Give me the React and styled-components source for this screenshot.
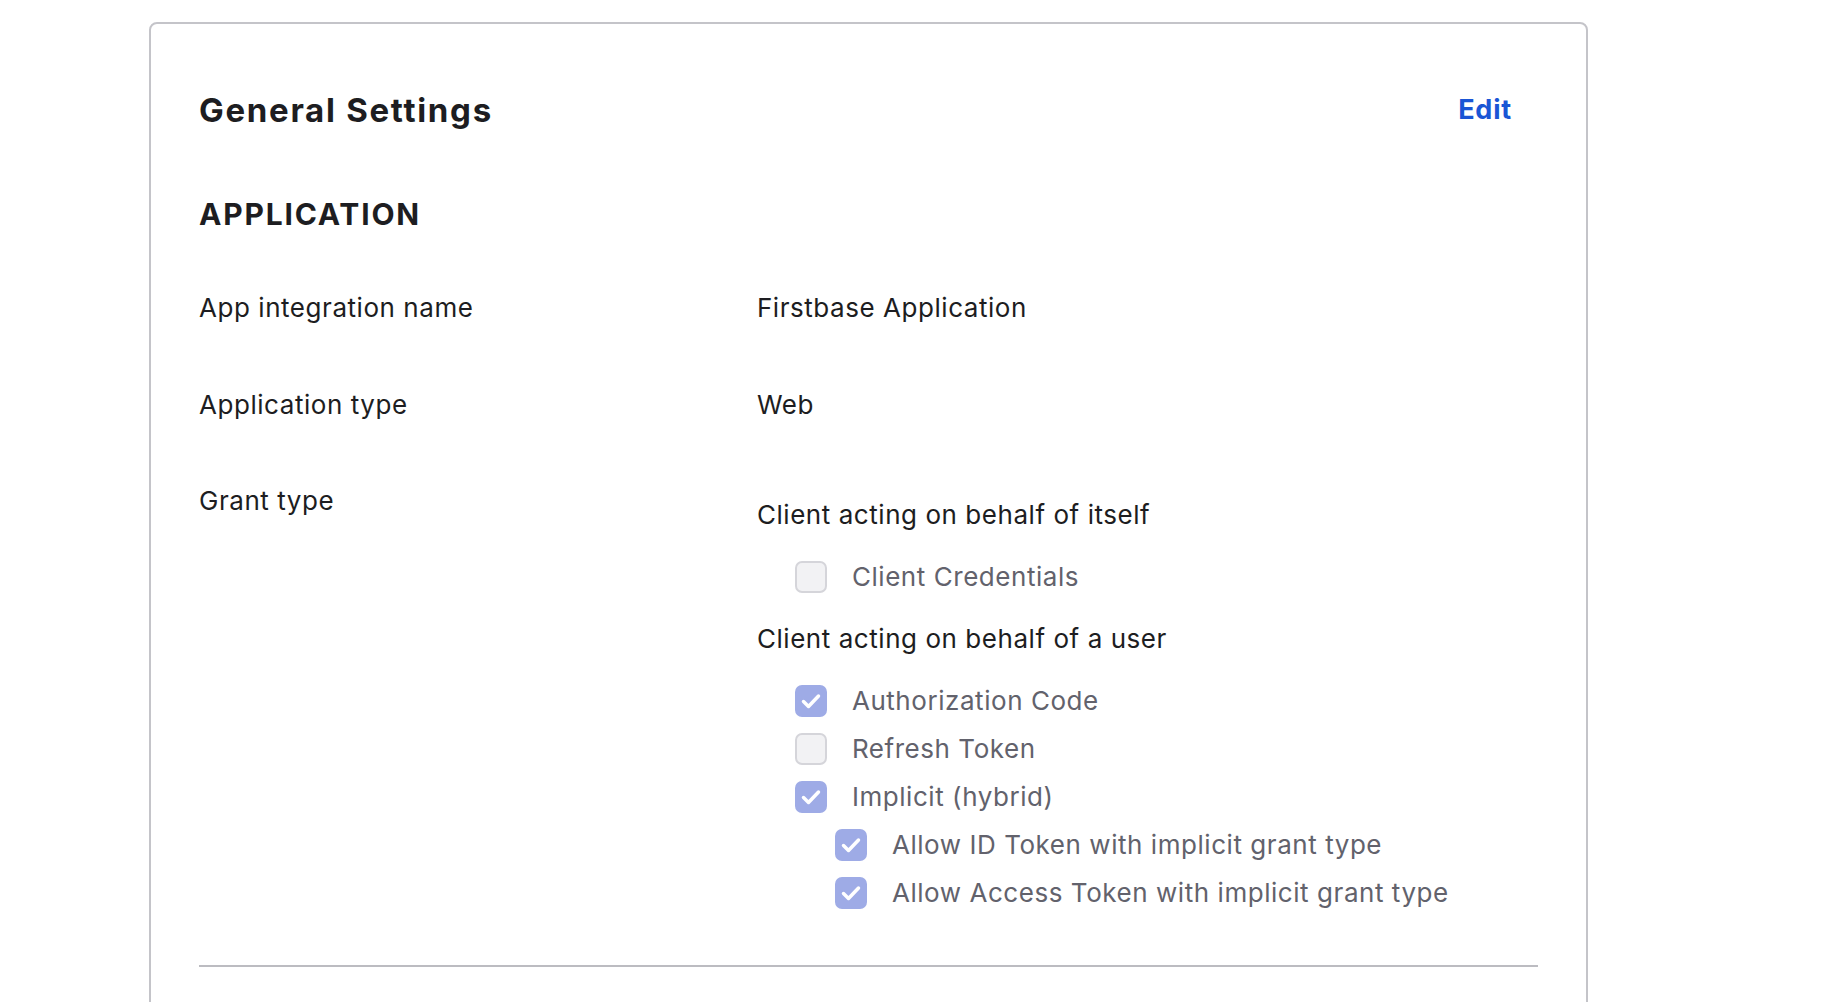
import styled, { createGlobalStyle } from 'styled-components';

const GlobalStyle = createGlobalStyle`
    html, body {
        margin: 0;
        padding: 0;
        overflow: hidden;
        background: #fff;
    }
    body {
        font-family: 'Inter', 'Noto Sans', sans-serif;
        color: #1d1d21;
    }
`;

const Page = styled.div`
    padding: 22px 0 0 149px;
`;

const Card = styled.section`
    box-sizing: border-box;
    width: 1439px;
    border: 2px solid #c4c4c9;
    border-radius: 8px;
    padding: 68px 48px 120px;
    background: #fff;
`;

const Header = styled.div`
    display: flex;
    justify-content: space-between;
    align-items: center;
`;

const Title = styled.h2`
    margin: 0;
    font-size: 33px;
    line-height: 36px;
    font-weight: 700;
    letter-spacing: 1.7px;
    color: #1d1d21;
`;

const EditButton = styled.button`
    background: none;
    border: none;
    padding: 0 26px 0 0;
    font-family: inherit;
    font-size: 27px;
    line-height: 36px;
    font-weight: 700;
    letter-spacing: 0.8px;
    color: #1a55d5;
    cursor: pointer;
`;

const SectionTitle = styled.h3`
    margin: 69px 0 0;
    font-size: 30px;
    line-height: 34px;
    font-weight: 700;
    letter-spacing: 1.8px;
    color: #1d1d21;
`;

const Fields = styled.dl`
    display: grid;
    grid-template-columns: 5fr 7fr;
    row-gap: 57.5px;
    margin: 57px 0 0;
`;

const Term = styled.dt`
    margin: 0;
    font-size: 26px;
    line-height: 39px;
    letter-spacing: 0.55px;
    color: #1d1d21;
`;

const Value = styled.dd`
    margin: 0;
    font-size: 26px;
    line-height: 39px;
    letter-spacing: 0.55px;
    color: #1d1d21;
`;

const GrantGroup = styled.div`
    display: flex;
    flex-direction: column;
    gap: 23px;
    padding-top: 14px;
`;

const Legend = styled.div`
    font-size: 26px;
    line-height: 39px;
    color: #1d1d21;
`;

const Options = styled.div`
    display: flex;
    flex-direction: column;
    gap: 9px;
    padding-left: ${(p) => p.$indent}px;
`;

const Option = styled.label`
    display: flex;
    align-items: center;
    gap: 25px;
    font-size: 26px;
    line-height: 39px;
    color: #62626c;
`;

const Box = styled.span`
    box-sizing: border-box;
    flex-shrink: 0;
    width: 32px;
    height: 32px;
    border-radius: 7px;
    display: grid;
    place-items: center;
    background: ${(p) => (p.$checked ? '#9eabe6' : '#f2f2f4')};
    border: ${(p) => (p.$checked ? 'none' : '2px solid #d5d5da')};
`;

const Divider = styled.hr`
    margin: 53px 0 0;
    border: none;
    border-top: 2px solid #bcbcc1;
`;

const Check = ({ checked, children }) => (
    <Option>
        <Box $checked={checked}>
            {checked && (
                <svg width="32" height="32" viewBox="0 0 32 32">
                    <path
                        d="M8.5 16.5 L13.5 21.5 L23.5 11"
                        fill="none"
                        stroke="#fff"
                        strokeWidth="3.5"
                        strokeLinecap="round"
                        strokeLinejoin="round"
                    />
                </svg>
            )}
        </Box>
        {children}
    </Option>
);

const App = () => {
    return (
        <>
            <GlobalStyle />
            <Page>
                <Card>
                    <Header>
                        <Title>General Settings</Title>
                        <EditButton>Edit</EditButton>
                    </Header>
                    <SectionTitle>APPLICATION</SectionTitle>
                    <Fields>
                        <Term>App integration name</Term>
                        <Value>Firstbase Application</Value>
                        <Term>Application type</Term>
                        <Value>Web</Value>
                        <Term>Grant type</Term>
                        <Value>
                            <GrantGroup>
                                <Legend>Client acting on behalf of itself</Legend>
                                <Options $indent={38}>
                                    <Check>Client Credentials</Check>
                                </Options>
                                <Legend>Client acting on behalf of a user</Legend>
                                <Options $indent={38}>
                                    <Check checked>Authorization Code</Check>
                                    <Check>Refresh Token</Check>
                                    <Check checked>Implicit (hybrid)</Check>
                                    <Options $indent={40}>
                                        <Check checked>Allow ID Token with implicit grant type</Check>
                                        <Check checked>Allow Access Token with implicit grant type</Check>
                                    </Options>
                                </Options>
                            </GrantGroup>
                        </Value>
                    </Fields>
                    <Divider />
                </Card>
            </Page>
        </>
    );
};

export default App;
